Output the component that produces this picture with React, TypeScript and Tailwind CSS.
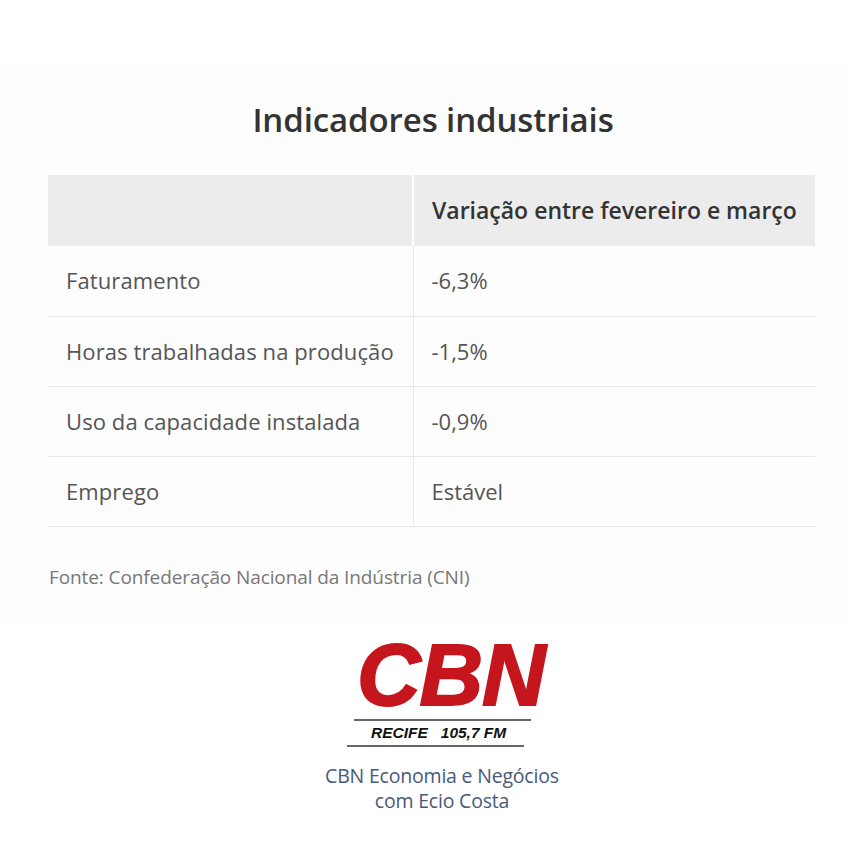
import React from 'react';

const rows = [
  { label: 'Faturamento', value: '-6,3%' },
  { label: 'Horas trabalhadas na produção', value: '-1,5%' },
  { label: 'Uso da capacidade instalada', value: '-0,9%' },
  { label: 'Emprego', value: 'Estável' },
];

const App = () => {
  return (
    <div className="w-[850px] h-[848px] bg-white font-['Open_Sans',sans-serif] overflow-hidden">
      <div className="mt-[66px] h-[555px] bg-[#fdfdfd] pt-[34px]">
        <h1 className="text-center text-[33px] leading-[40px] font-semibold text-[#333] tracking-[-0.1px] pl-[16px]">
          Indicadores industriais
        </h1>

        <table className="ml-[48px] mt-[35px] w-[767px] border-collapse text-[22px] text-[#555]">
          <thead>
            <tr className="bg-[#ececec] h-[71px]">
              <th className="w-[365px] border-r-2 border-white"></th>
              <th className="text-left pl-[18px] font-semibold text-[#333] text-[23px]">
                Variação entre fevereiro e março
              </th>
            </tr>
          </thead>
          <tbody>
            {rows.map((row) => (
              <tr key={row.label} className="h-[70px] border-b border-[#e8e8e8]">
                <td className="pl-[18px] border-r border-[#e8e8e8] tracking-[0.1px]">{row.label}</td>
                <td className="pl-[18px]">{row.value}</td>
              </tr>
            ))}
          </tbody>
        </table>

        <p className="ml-[49px] mt-[36px] text-[19px] text-[#777] tracking-[-0.1px]">
          Fonte: Confederação Nacional da Indústria (CNI)
        </p>
      </div>

      <div className="flex flex-col mt-[14px]">
        <div className="ml-[357px] font-['Liberation_Sans',sans-serif] italic font-black text-[88px] leading-[80px] text-[#c4161c] tracking-[-1px] [-webkit-text-stroke:2px_#c4161c]">
          CBN
        </div>
        <div className="ml-[354px] w-[177px] h-[2px] bg-[#666] mt-[4px]"></div>
        <div className="ml-[371px] font-['Liberation_Sans',sans-serif] italic font-bold text-[15.5px] leading-[24px] text-[#111]">
          RECIFE&nbsp;&nbsp;&nbsp;105,7 FM
        </div>
        <div className="ml-[347px] w-[177px] h-[2px] bg-[#666]"></div>
        <div className="mt-[16px] text-center text-[19.5px] leading-[25px] text-[#48597a] tracking-[-0.2px] pl-[34px]">
          <div>CBN Economia e Negócios</div>
          <div>com Ecio Costa</div>
        </div>
      </div>
    </div>
  );
};

export default App;
